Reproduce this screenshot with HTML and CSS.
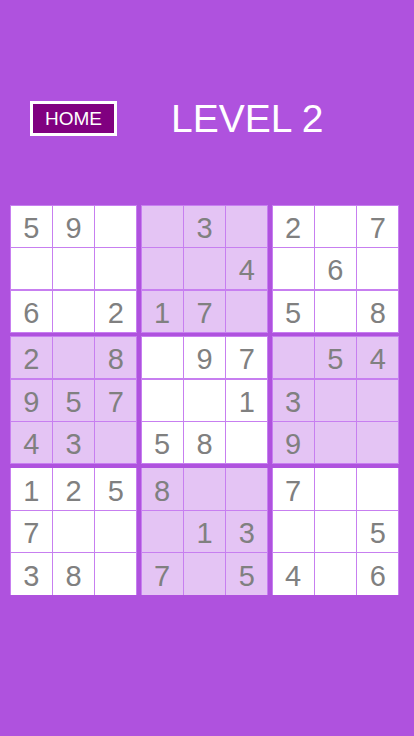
FILE: index.html
```html
<!DOCTYPE html>
<html>
<head>
<meta charset="utf-8">
<link rel="stylesheet" href="styles.css">
</head>
<body>
<div class="header">
  <div class="home">HOME</div>
  <div class="level">LEVEL 2</div>
</div>
<div class="board">
  <div class="box"><div class="cell">5</div><div class="cell">9</div><div class="cell"></div><div class="cell"></div><div class="cell"></div><div class="cell"></div><div class="cell">6</div><div class="cell"></div><div class="cell">2</div></div>
  <div class="box shade"><div class="cell"></div><div class="cell">3</div><div class="cell"></div><div class="cell"></div><div class="cell"></div><div class="cell">4</div><div class="cell">1</div><div class="cell">7</div><div class="cell"></div></div>
  <div class="box"><div class="cell">2</div><div class="cell"></div><div class="cell">7</div><div class="cell"></div><div class="cell">6</div><div class="cell"></div><div class="cell">5</div><div class="cell"></div><div class="cell">8</div></div>
  <div class="box shade"><div class="cell">2</div><div class="cell"></div><div class="cell">8</div><div class="cell">9</div><div class="cell">5</div><div class="cell">7</div><div class="cell">4</div><div class="cell">3</div><div class="cell"></div></div>
  <div class="box"><div class="cell"></div><div class="cell">9</div><div class="cell">7</div><div class="cell"></div><div class="cell"></div><div class="cell">1</div><div class="cell">5</div><div class="cell">8</div><div class="cell"></div></div>
  <div class="box shade"><div class="cell"></div><div class="cell">5</div><div class="cell">4</div><div class="cell">3</div><div class="cell"></div><div class="cell"></div><div class="cell">9</div><div class="cell"></div><div class="cell"></div></div>
  <div class="box"><div class="cell">1</div><div class="cell">2</div><div class="cell">5</div><div class="cell">7</div><div class="cell"></div><div class="cell"></div><div class="cell">3</div><div class="cell">8</div><div class="cell"></div></div>
  <div class="box shade"><div class="cell">8</div><div class="cell"></div><div class="cell"></div><div class="cell"></div><div class="cell">1</div><div class="cell">3</div><div class="cell">7</div><div class="cell"></div><div class="cell">5</div></div>
  <div class="box"><div class="cell">7</div><div class="cell"></div><div class="cell"></div><div class="cell"></div><div class="cell"></div><div class="cell">5</div><div class="cell">4</div><div class="cell"></div><div class="cell">6</div></div>
</div>
</body>
</html>
```
FILE: styles.css
```css
html, body {
  margin: 0;
  padding: 0;
}
body {
  background: #af52de;
  width: 414px;
  height: 736px;
  font-family: "Liberation Sans", Arial, sans-serif;
  overflow: hidden;
}
.header {
  display: flex;
  align-items: flex-start;
  padding: 99px 0 0 30px;
  gap: 54px;
}
.home {
  margin-top: 2px;
  width: 81px;
  height: 29px;
  border: 3px solid #ffffff;
  background: #800080;
  color: #ffffff;
  font-size: 19px;
  display: flex;
  align-items: center;
  justify-content: center;
}
.level {
  color: #ffffff;
  font-size: 39px;
  line-height: 39px;
}
.board {
  margin: 67px 0 0 10px;
  width: 389px;
  display: grid;
  grid-template-columns: repeat(3, 1fr);
  gap: 3.7px;
}
.box {
  display: grid;
  grid-template-columns: repeat(3, 1fr);
  grid-auto-rows: 41.1px;
  gap: 1.4px;
  padding: 0.8px;
  background: #c77ff0;
}
.cell {
  background: #ffffff;
  color: #808080;
  font-size: 29px;
  padding-top: 4px;
  box-sizing: border-box;
  display: flex;
  align-items: center;
  justify-content: center;
}
.shade .cell {
  background: #e4c4f4;
}
```
